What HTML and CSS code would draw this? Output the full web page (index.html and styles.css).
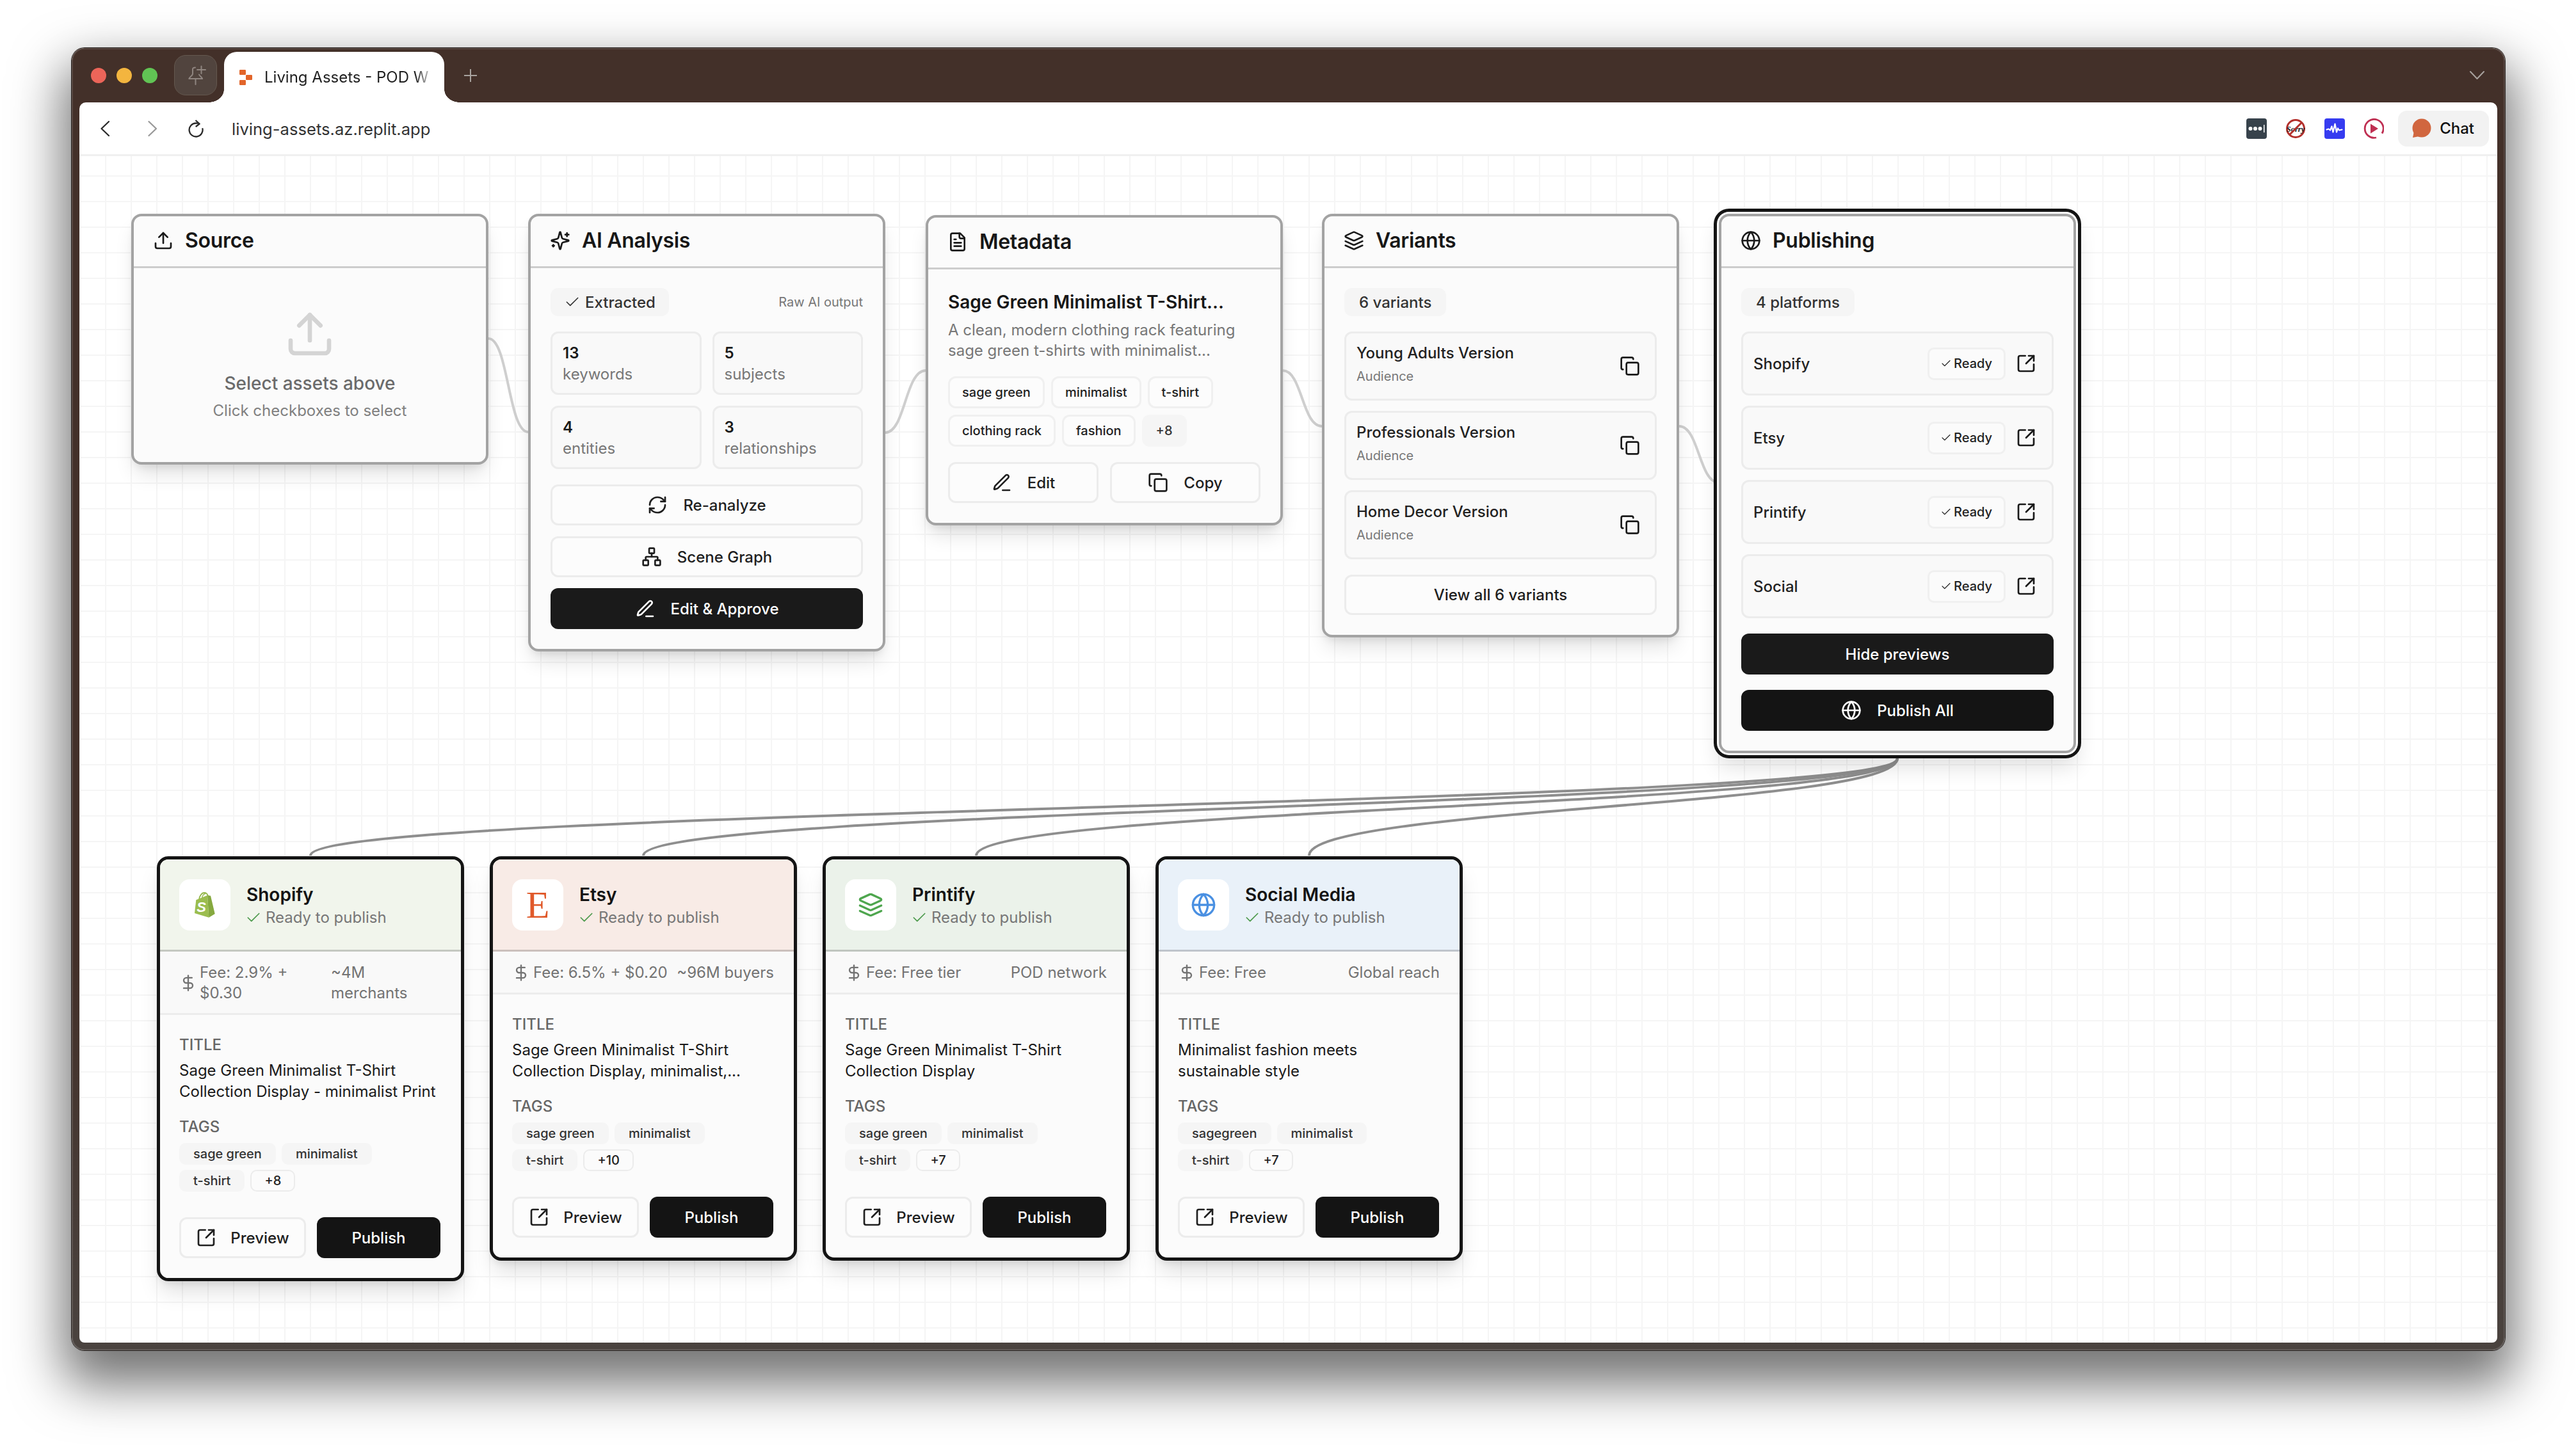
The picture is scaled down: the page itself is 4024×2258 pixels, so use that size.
FILE: index.html
```html
<!DOCTYPE html>
<html lang="en">
<head>
<meta charset="utf-8">
<title>Living Assets - POD Workflow</title>
<link rel="stylesheet" href="styles.css">
</head>
<body>
<svg class="sprite" xmlns="http://www.w3.org/2000/svg">
  <symbol id="i-upload" viewBox="0 0 24 24"><path d="M21 15v4a2 2 0 0 1-2 2H5a2 2 0 0 1-2-2v-4"/><path d="M17 8 12 3 7 8"/><path d="M12 3v12"/></symbol>
  <symbol id="i-spark" viewBox="0 0 24 24"><path d="M9.937 15.5A2 2 0 0 0 8.5 14.063l-6.135-1.582a.5.5 0 0 1 0-.962L8.5 9.936A2 2 0 0 0 9.937 8.5l1.582-6.135a.5.5 0 0 1 .963 0L14.063 8.5A2 2 0 0 0 15.5 9.937l6.135 1.581a.5.5 0 0 1 0 .964L15.5 14.063a2 2 0 0 0-1.437 1.437l-1.582 6.135a.5.5 0 0 1-.963 0z"/><path d="M20 3v4"/><path d="M22 5h-4"/><path d="M4 17v2"/><path d="M5 18H3"/></symbol>
  <symbol id="i-file" viewBox="0 0 24 24"><path d="M15 2H6a2 2 0 0 0-2 2v16a2 2 0 0 0 2 2h12a2 2 0 0 0 2-2V7Z"/><path d="M14 2v4a2 2 0 0 0 2 2h4"/><path d="M10 9H8"/><path d="M16 13H8"/><path d="M16 17H8"/></symbol>
  <symbol id="i-layers" viewBox="0 0 24 24"><path d="m12.83 2.18a2 2 0 0 0-1.66 0L2.6 6.08a1 1 0 0 0 0 1.83l8.58 3.91a2 2 0 0 0 1.66 0l8.58-3.9a1 1 0 0 0 0-1.83Z"/><path d="m22 17.65-9.17 4.16a2 2 0 0 1-1.66 0L2 17.65"/><path d="m22 12.65-9.17 4.16a2 2 0 0 1-1.66 0L2 12.65"/></symbol>
  <symbol id="i-globe" viewBox="0 0 24 24"><circle cx="12" cy="12" r="10"/><path d="M12 2a14.5 14.5 0 0 0 0 20 14.5 14.5 0 0 0 0-20"/><path d="M2 12h20"/></symbol>
  <symbol id="i-check" viewBox="0 0 24 24"><path d="M20 6 9 17l-5-5"/></symbol>
  <symbol id="i-refresh" viewBox="0 0 24 24"><path d="M3 12a9 9 0 0 1 9-9 9.75 9.75 0 0 1 6.74 2.74L21 8"/><path d="M21 3v5h-5"/><path d="M21 12a9 9 0 0 1-9 9 9.75 9.75 0 0 1-6.74-2.74L3 16"/><path d="M8 16H3v5"/></symbol>
  <symbol id="i-network" viewBox="0 0 24 24"><rect x="16" y="16" width="6" height="6" rx="1"/><rect x="2" y="16" width="6" height="6" rx="1"/><rect x="9" y="2" width="6" height="6" rx="1"/><path d="M5 16v-3a1 1 0 0 1 1-1h12a1 1 0 0 1 1 1v3"/><path d="M12 12V8"/></symbol>
  <symbol id="i-pen" viewBox="0 0 24 24"><path d="M13 21h8"/><path d="M16.376 3.622a1 1 0 0 1 3.002 3.002L7.368 18.635a2 2 0 0 1-.855.506l-2.872.838a.5.5 0 0 1-.62-.62l.838-2.872a2 2 0 0 1 .506-.854z"/></symbol>
  <symbol id="i-copy" viewBox="0 0 24 24"><rect x="8" y="8" width="14" height="14" rx="2"/><path d="M4 16c-1.1 0-2-.9-2-2V4c0-1.1.9-2 2-2h10c1.1 0 2 .9 2 2"/></symbol>
  <symbol id="i-ext" viewBox="0 0 24 24"><path d="M21 13v6a2 2 0 0 1-2 2H5a2 2 0 0 1-2-2V5a2 2 0 0 1 2-2h6"/><path d="m21 3-9 9"/><path d="M15 3h6v6"/></symbol>
  <symbol id="i-dollar" viewBox="0 0 24 24"><path d="M12 2v20"/><path d="M17 5H9.5a3.5 3.5 0 0 0 0 7h5a3.5 3.5 0 0 1 0 7H6"/></symbol>
</svg>

<div class="window">
  <div class="tabstrip">
    <div class="lights"><span class="light red"></span><span class="light yellow"></span><span class="light green"></span></div>
    <div class="pin">
      <svg class="i pin-icon" viewBox="0 0 32 34"><path d="M15.500 23v8"/><path d="M5.500 22h20.500"/><path d="M5.500 22C6 19 10.500 18 11 14.500V7C11 5.500 13 4.500 15 4.500"/><path d="M26 22C25.500 19.500 22 18 21 15.500"/><path d="M18 8h13"/><path d="M24.500 2.500V14"/></svg>
    </div>
    <div class="tab">
      <svg class="favicon" viewBox="0 0 20 24"><rect x="0" y="0" width="10" height="8" rx="1.200"/><rect x="10" y="8" width="10" height="8" rx="1.200"/><rect x="0" y="16" width="10" height="8" rx="1.200"/></svg>
      <span class="tab-title">Living Assets - POD W</span>
    </div>
    <svg class="i plus" viewBox="0 0 20 20"><path d="M10 0v20M0 10h20"/></svg>
    <svg class="i collapse" viewBox="0 0 23 13"><path d="M1 1l10.500 11L22 1"/></svg>
  </div>

  <div class="toolbar">
    <svg class="i nav" viewBox="0 0 28 28"><path d="M19 3 7.500 14 19 25"/></svg>
    <svg class="i nav nav-off" viewBox="0 0 28 28"><path d="M8.500 3 20 14 8.500 25"/></svg>
    <svg class="i nav nav-reload" viewBox="0 0 28 28"><path d="M24.200 13.200A10.500 10.500 0 1 1 14 5.500h4"/><path d="M13.500 1 19.700 6.500 13.700 11"/></svg>
    <span class="url">living-assets.az.replit.app</span>
    <div class="toolbar-right">
      <div class="extensions">
        <svg class="ext" viewBox="0 0 32 32"><rect width="32" height="32" rx="4" fill="#37424b"/><circle cx="6.500" cy="16" r="3" fill="#fff"/><circle cx="14" cy="16" r="3" fill="#fff"/><circle cx="21.500" cy="16" r="3" fill="#fff"/><rect x="27" y="10" width="1.500" height="12" fill="#fff"/></svg>
        <svg class="ext" viewBox="0 0 32 32"><circle cx="16" cy="16" r="13.500" fill="#fff" stroke="#b3302c" stroke-width="3"/><text x="16" y="20.500" text-anchor="middle" class="sorry">Sorry</text><path d="M25.500 6.500 6.500 25.500" stroke="#b3302c" stroke-width="3"/></svg>
        <svg class="ext" viewBox="0 0 32 32"><rect width="32" height="32" rx="4" fill="#363cf0"/><path d="M3.500 17.500l3-1 2.500 2 2.500-6 2 9 3-13 2.500 13 2-6 2 3 4.500-1" fill="none" stroke="#fff" stroke-width="2.200" stroke-linejoin="round" stroke-linecap="round"/></svg>
        <svg class="ext" viewBox="0 0 32 32"><path d="M29 23.500A14.500 14.500 0 1 0 20 30" fill="none" stroke="#bf2f52" stroke-width="2.800"/><path d="M11 8.500 23 16 11 23.500z" fill="#bf2f52"/></svg>
      </div>
      <div class="chat">
        <svg class="chat-bubble" viewBox="0 0 32 32"><circle cx="17" cy="15" r="14.500" fill="#d1663f"/><path d="M3 30l2-10 8 8z" fill="#d1663f"/></svg>
        <span>Chat</span>
      </div>
    </div>
  </div>

  <div class="canvas">
    <svg class="edges" viewBox="0 0 3776 1854">
      <g class="edge-soft">
        <path d="M639 285C670 285 670 431 701 431"/>
        <path d="M1259 432C1290 432 1290 335 1322 335"/>
        <path d="M1880 335C1910 335 1910 422 1941 422"/>
        <path d="M2499 422C2530 422 2530 510 2561 510"/>
      </g>
      <g class="edge-strong">
        <path d="M2840 941C2840 1017 361 1017 361 1093"/>
        <path d="M2840 941C2840 1017 881 1017 881 1093"/>
        <path d="M2840 941C2840 1017 1401 1017 1401 1093"/>
        <path d="M2840 941C2840 1017 1921 1017 1921 1093"/>
      </g>
    </svg>

    <section class="node node-source">
      <header class="node-head"><svg class="i i32"><use href="#i-upload"/></svg><h3>Source</h3></header>
      <div class="source-body">
        <svg class="i source-icon"><use href="#i-upload"/></svg>
        <p class="source-title">Select assets above</p>
        <p class="source-sub">Click checkboxes to select</p>
      </div>
    </section>

    <section class="node node-ai">
      <header class="node-head"><svg class="i i32"><use href="#i-spark"/></svg><h3>AI Analysis</h3></header>
      <div class="node-body">
        <div class="between">
          <span class="pill pill-check"><svg class="i i26 thin-icon"><use href="#i-check"/></svg>Extracted</span>
          <span class="meta-note">Raw AI output</span>
        </div>
        <div class="stats">
          <div class="stat"><b>13</b><span>keywords</span></div>
          <div class="stat"><b>5</b><span>subjects</span></div>
          <div class="stat"><b>4</b><span>entities</span></div>
          <div class="stat"><b>3</b><span>relationships</span></div>
        </div>
        <div class="stack">
          <button class="btn btn-line"><svg class="i i32"><use href="#i-refresh"/></svg>Re-analyze</button>
          <button class="btn btn-line"><svg class="i i32"><use href="#i-network"/></svg>Scene Graph</button>
          <button class="btn btn-dark"><svg class="i i32"><use href="#i-pen"/></svg>Edit &amp; Approve</button>
        </div>
      </div>
    </section>

    <section class="node node-meta">
      <header class="node-head"><svg class="i i32"><use href="#i-file"/></svg><h3>Metadata</h3></header>
      <div class="node-body">
        <h4 class="meta-title">Sage Green Minimalist T-Shirt...</h4>
        <p class="meta-desc">A clean, modern clothing rack featuring<br>sage green t-shirts with minimalist...</p>
        <div class="meta-tags">
          <span class="mtag">sage green</span><span class="mtag">minimalist</span><span class="mtag">t-shirt</span><span class="mtag">clothing rack</span><span class="mtag">fashion</span><span class="mtag mtag-more">+8</span>
        </div>
        <div class="split">
          <button class="btn btn-line"><svg class="i i32"><use href="#i-pen"/></svg>Edit</button>
          <button class="btn btn-line"><svg class="i i32"><use href="#i-copy"/></svg>Copy</button>
        </div>
      </div>
    </section>

    <section class="node node-variants">
      <header class="node-head"><svg class="i i32"><use href="#i-layers"/></svg><h3>Variants</h3></header>
      <div class="node-body">
        <div><span class="pill">6 variants</span></div>
        <div class="rows">
          <div class="variant"><div class="variant-text"><p class="variant-name">Young Adults Version</p><p class="variant-sub">Audience</p></div><svg class="i i32"><use href="#i-copy"/></svg></div>
          <div class="variant"><div class="variant-text"><p class="variant-name">Professionals Version</p><p class="variant-sub">Audience</p></div><svg class="i i32"><use href="#i-copy"/></svg></div>
          <div class="variant"><div class="variant-text"><p class="variant-name">Home Decor Version</p><p class="variant-sub">Audience</p></div><svg class="i i32"><use href="#i-copy"/></svg></div>
        </div>
        <button class="btn btn-line btn-short">View all 6 variants</button>
      </div>
    </section>

    <section class="node node-publishing">
      <header class="node-head"><svg class="i i32"><use href="#i-globe"/></svg><h3>Publishing</h3></header>
      <div class="node-body">
        <div><span class="pill">4 platforms</span></div>
        <div class="rows">
          <div class="platform"><span class="platform-name">Shopify</span><span class="ready"><svg class="i i18 thin-icon"><use href="#i-check"/></svg>Ready</span><svg class="i i32"><use href="#i-ext"/></svg></div>
          <div class="platform"><span class="platform-name">Etsy</span><span class="ready"><svg class="i i18 thin-icon"><use href="#i-check"/></svg>Ready</span><svg class="i i32"><use href="#i-ext"/></svg></div>
          <div class="platform"><span class="platform-name">Printify</span><span class="ready"><svg class="i i18 thin-icon"><use href="#i-check"/></svg>Ready</span><svg class="i i32"><use href="#i-ext"/></svg></div>
          <div class="platform"><span class="platform-name">Social</span><span class="ready"><svg class="i i18 thin-icon"><use href="#i-check"/></svg>Ready</span><svg class="i i32"><use href="#i-ext"/></svg></div>
        </div>
        <div class="publish-actions">
          <button class="btn btn-dark">Hide previews</button>
          <button class="btn btn-black"><svg class="i i32"><use href="#i-globe"/></svg>Publish All</button>
        </div>
      </div>
    </section>

    <article class="pcard pcard-1">
      <header class="pcard-head tint-shopify">
        <div class="logo">
          <svg class="shopify-logo" viewBox="0 0 32 40">
            <path fill="none" stroke="#95b84c" stroke-width="1.800" d="M7 11C8 6 11 1 15 1 18 1 20 3 21 6"/>
            <path fill="none" stroke="#95b84c" stroke-width="1.300" d="M11.500 9C12.500 5 14.500 2.500 17 2.500"/>
            <path fill="#9bbd4e" d="M0 33 2.300 12.300 20 5 22.300 39.700Z"/>
            <path fill="#86a93f" d="M20 5 25 5.700 31.700 34 22.300 39.700Z"/>
            <text x="10.500" y="31" text-anchor="middle" class="shopify-s">S</text>
          </svg>
        </div>
        <div><p class="pcard-name">Shopify</p><p class="pcard-status"><svg class="i i26"><use href="#i-check"/></svg>Ready to publish</p></div>
      </header>
      <div class="fee fee-wrap">
        <svg class="i i28"><use href="#i-dollar"/></svg>
        <span class="fee-left">Fee: 2.9% +<br>$0.30</span>
        <span>~4M<br>merchants</span>
      </div>
      <div class="pcard-body">
        <p class="label">TITLE</p>
        <p class="value">Sage Green Minimalist T-Shirt<br>Collection Display - minimalist Print</p>
        <p class="label label-tags">TAGS</p>
        <div class="tags"><span class="tag">sage green</span><span class="tag">minimalist</span><span class="tag">t-shirt</span><span class="tag tag-more">+8</span></div>
        <div class="pcard-actions">
          <button class="btn btn-line btn-preview"><svg class="i i32"><use href="#i-ext"/></svg>Preview</button>
          <button class="btn btn-black btn-publish">Publish</button>
        </div>
      </div>
    </article>

    <article class="pcard pcard-2">
      <header class="pcard-head tint-etsy">
        <div class="logo"><span class="etsy-e">E</span></div>
        <div><p class="pcard-name">Etsy</p><p class="pcard-status"><svg class="i i26"><use href="#i-check"/></svg>Ready to publish</p></div>
      </header>
      <div class="fee">
        <span class="fee-group"><svg class="i i28"><use href="#i-dollar"/></svg>Fee: 6.5% + $0.20</span>
        <span>~96M buyers</span>
      </div>
      <div class="pcard-body">
        <p class="label">TITLE</p>
        <p class="value">Sage Green Minimalist T-Shirt<br>Collection Display, minimalist,...</p>
        <p class="label label-tags">TAGS</p>
        <div class="tags"><span class="tag">sage green</span><span class="tag">minimalist</span><span class="tag">t-shirt</span><span class="tag tag-more">+10</span></div>
        <div class="pcard-actions">
          <button class="btn btn-line btn-preview"><svg class="i i32"><use href="#i-ext"/></svg>Preview</button>
          <button class="btn btn-black btn-publish">Publish</button>
        </div>
      </div>
    </article>

    <article class="pcard pcard-3">
      <header class="pcard-head tint-printify">
        <div class="logo"><svg class="i i44 printify-logo"><use href="#i-layers"/></svg></div>
        <div><p class="pcard-name">Printify</p><p class="pcard-status"><svg class="i i26"><use href="#i-check"/></svg>Ready to publish</p></div>
      </header>
      <div class="fee">
        <span class="fee-group"><svg class="i i28"><use href="#i-dollar"/></svg>Fee: Free tier</span>
        <span>POD network</span>
      </div>
      <div class="pcard-body">
        <p class="label">TITLE</p>
        <p class="value">Sage Green Minimalist T-Shirt<br>Collection Display</p>
        <p class="label label-tags">TAGS</p>
        <div class="tags"><span class="tag">sage green</span><span class="tag">minimalist</span><span class="tag">t-shirt</span><span class="tag tag-more">+7</span></div>
        <div class="pcard-actions">
          <button class="btn btn-line btn-preview"><svg class="i i32"><use href="#i-ext"/></svg>Preview</button>
          <button class="btn btn-black btn-publish">Publish</button>
        </div>
      </div>
    </article>

    <article class="pcard pcard-4">
      <header class="pcard-head tint-social">
        <div class="logo"><svg class="i i44 social-logo"><use href="#i-globe"/></svg></div>
        <div><p class="pcard-name">Social Media</p><p class="pcard-status"><svg class="i i26"><use href="#i-check"/></svg>Ready to publish</p></div>
      </header>
      <div class="fee">
        <span class="fee-group"><svg class="i i28"><use href="#i-dollar"/></svg>Fee: Free</span>
        <span>Global reach</span>
      </div>
      <div class="pcard-body">
        <p class="label">TITLE</p>
        <p class="value">Minimalist fashion meets<br>sustainable style</p>
        <p class="label label-tags">TAGS</p>
        <div class="tags"><span class="tag">sagegreen</span><span class="tag">minimalist</span><span class="tag">t-shirt</span><span class="tag tag-more">+7</span></div>
        <div class="pcard-actions">
          <button class="btn btn-line btn-preview"><svg class="i i32"><use href="#i-ext"/></svg>Preview</button>
          <button class="btn btn-black btn-publish">Publish</button>
        </div>
      </div>
    </article>
  </div>
</div>
</body>
</html>
```
FILE: styles.css
```css
* { box-sizing: border-box; }
html, body { margin: 0; height: 100%; }
body {
  background: #fff;
  font-family: Inter, "Liberation Sans", sans-serif;
  color: #1a1a1a;
  padding: 75px 0 0 112px;
  overflow: hidden;
}
p, h3, h4 { margin: 0; font-weight: inherit; }
button { font: inherit; color: inherit; cursor: pointer; }
.sprite { display: none; }

.i { fill: none; stroke: currentColor; stroke-width: 2; stroke-linecap: round; stroke-linejoin: round; flex: none; }
.thin-icon { stroke-width: 1.5; }
.i18 { width: 18px; height: 18px; }
.i26 { width: 26px; height: 26px; }
.i28 { width: 28px; height: 28px; }
.i32 { width: 32px; height: 32px; }
.i44 { width: 40px; height: 40px; }

/* browser chrome */
.window {
  width: 3801px;
  height: 2035px;
  padding: 0 12px 12px;
  border-radius: 20px;
  background: linear-gradient(#433029 0, #433029 70%, #4a433f 100%);
  box-shadow: inset 0 0 0 2px rgba(255,255,255,.12), 0 0 0 1px #2a2523, 0 40px 80px 14px rgba(0,0,0,.55);
  display: flex;
  flex-direction: column;
}
.tabstrip { height: 85px; flex: none; display: flex; align-items: center; padding-left: 18px; }
.lights { display: flex; gap: 16px; }
.light { width: 24px; height: 24px; border-radius: 50%; }
.red { background: #ec6559; }
.yellow { background: #f3b53f; }
.green { background: #61c454; }
.pin {
  width: 67px; height: 63px; margin-left: 26px;
  border-radius: 18px; background: #51443e; border: 1px solid #64584f;
  display: flex; align-items: center; justify-content: center;
}
.pin-icon { width: 32px; height: 34px; color: #8f8580; }
.tab {
  position: relative;
  width: 344px; height: 79px; margin-left: 11px;
  align-self: flex-end;
  background: #fff;
  border-radius: 20px 20px 0 0;
  display: flex; align-items: center; gap: 19px;
  padding-left: 24px;
}
.tab::before, .tab::after {
  content: ""; position: absolute; bottom: 0; width: 24px; height: 20px;
}
.tab::before { left: -24px; background: radial-gradient(ellipse 24px 20px at 0 0, transparent 98%, #fff 100%); }
.tab::after { right: -24px; background: radial-gradient(ellipse 24px 20px at 100% 0, transparent 98%, #fff 100%); }
.favicon { width: 20px; height: 24px; fill: #e2652a; flex: none; }
.tab-title {
  font-size: 24px; white-space: nowrap; width: 262px; color: #1f1f1f;
  -webkit-mask-image: linear-gradient(90deg, #000 90%, rgba(0,0,0,.1));
  mask-image: linear-gradient(90deg, #000 90%, rgba(0,0,0,.1));
}
.plus { width: 20px; height: 20px; margin-left: 31px; color: #a8a29e; }
.collapse { width: 23px; height: 13px; margin-left: auto; margin-right: 20px; color: #a8a29e; }

.toolbar {
  height: 84px; flex: none;
  background: #fff;
  border-bottom: 3px solid #f0f0f0;
  border-radius: 10px 10px 0 0;
  display: flex; align-items: center;
  padding-left: 27px; padding-right: 13px;
  gap: 45px;
}
.nav { width: 28px; height: 28px; color: #2b2b2b; stroke-width: 2.300; }
.nav-off { color: #999; }
.nav-reload { margin-left: -5px; stroke-linecap: butt; }
.url { font-size: 25.600px; color: #333; margin-left: -3px; position: relative; top: 1px; }
.toolbar-right { margin-left: auto; display: flex; align-items: center; gap: 22px; }
.extensions { display: flex; align-items: center; gap: 29px; }
.ext { width: 32px; height: 32px; display: block; }
.sorry { font: italic 700 12.500px "Liberation Serif", serif; fill: #1a1a1a; }
.chat {
  height: 56px; padding: 0 23px 0 20px;
  background: #f2f2f2; border-radius: 14px;
  display: flex; align-items: center; gap: 13px;
  font-size: 24px; font-weight: 500; color: #111;
}
.chat-bubble { width: 32px; height: 32px; }

/* canvas */
.canvas {
  position: relative;
  flex: 1;
  background-color: #fff;
  background-image:
    linear-gradient(#f5f5f5 2px, transparent 2px),
    linear-gradient(90deg, #f5f5f5 2px, transparent 2px);
  background-size: 40px 40px;
  background-position: 0 -10px;
  border-radius: 0 0 8px 8px;
  overflow: hidden;
}
.edges { position: absolute; inset: 0; width: 3776px; height: 1854px; fill: none; }
.edge-soft { stroke: #cfcfcf; stroke-width: 4; }
.edge-strong { stroke: #8e8e8e; stroke-width: 4; }

/* flow nodes */
.node {
  position: absolute;
  width: 558px;
  background: #fbfbfb;
  border: 4px solid #a3a3a3;
  border-radius: 16px;
  box-shadow: 0 20px 32px -6px rgba(0,0,0,.12), 0 8px 14px -6px rgba(0,0,0,.1);
}
.node-source { left: 81px; top: 90px; height: 392px; }
.node-ai { left: 701px; top: 90px; }
.node-meta { left: 1322px; top: 92px; }
.node-variants { left: 1941px; top: 90px; }
.node-publishing {
  left: 2561px; top: 90px;
  box-shadow: 0 0 0 3px #fff, 0 0 0 8px #141414, 0 20px 32px 2px rgba(0,0,0,.12);
}
.node-head {
  height: 81px;
  border-bottom: 3px solid #cdcdcd;
  display: flex; align-items: center; gap: 18px;
  padding: 0 30px 3px;
  color: #1a1a1a;
}
.node-head h3 { font-size: 32px; font-weight: 600; letter-spacing: -.3px; color: #171717; }
.node-body { padding: 31px; display: flex; flex-direction: column; }

.source-body { padding-top: 63px; display: flex; flex-direction: column; align-items: center; text-align: center; }
.source-icon { width: 80px; height: 80px; color: #d4d4d4; }
.source-title { margin-top: 17px; font-size: 28px; line-height: 40px; font-weight: 500; color: #6b6b6b; }
.source-sub { margin-top: 7px; font-size: 24px; line-height: 32px; color: #808080; }

.between { display: flex; align-items: center; justify-content: space-between; }
.pill {
  display: inline-flex; align-items: center; gap: 7px;
  height: 44px; padding: 0 23px;
  background: #f5f5f5; border-radius: 12px;
  font-size: 24px; font-weight: 500; color: #333;
}
.pill-check { padding: 0 21px; }
.meta-note { font-size: 20px; color: #777; }

.stats { margin-top: 24px; display: grid; grid-template-columns: 1fr 1fr; gap: 17px; }
.stat {
  height: 99px; padding: 0 16px;
  background: #f9f9f9; border: 3px solid #ececec; border-radius: 12px;
  display: flex; flex-direction: column; justify-content: center;
}
.stat b { font-size: 24px; font-weight: 600; line-height: 33px; }
.stat span { font-size: 24px; line-height: 33px; color: #777; }

.stack { margin-top: 24px; display: flex; flex-direction: column; gap: 17px; }
.btn {
  height: 64px; width: 100%;
  border-radius: 12px;
  display: flex; align-items: center; justify-content: center; gap: 24px;
  font-size: 24px; font-weight: 500;
  padding: 0;
}
.btn-line { background: #fcfcfc; border: 3px solid #ececec; color: #1f1f1f; }
.btn-dark { background: #1a1a1a; border: 0; color: #fff; }
.btn-black { background: #141414; border: 0; color: #fff; }
.btn-short { height: 63px; margin-top: 24px; }

.meta-title { font-size: 28px; line-height: 40px; font-weight: 600; color: #171717; }
.meta-desc { margin-top: 8px; font-size: 24px; line-height: 32px; color: #777; }
.meta-tags { margin-top: 24px; display: flex; flex-wrap: wrap; gap: 10px; }
.mtag {
  height: 50px; padding: 0 19px;
  border: 3px solid #f0f0f0; border-radius: 12px; background: #fcfcfc;
  display: flex; align-items: center;
  font-size: 20px; font-weight: 500; color: #222;
}
.mtag-more { background: #f5f5f5; border-color: #f5f5f5; color: #333; }
.split { margin-top: 24px; display: grid; grid-template-columns: 1fr 1fr; gap: 18px; }

.rows { margin-top: 24px; display: flex; flex-direction: column; gap: 16px; }
.variant {
  height: 108px; padding: 0 23px 0 16px;
  background: #f9f9f9; border: 3px solid #ececec; border-radius: 12px;
  display: flex; align-items: center; justify-content: space-between;
}
.variant-text { padding-bottom: 4px; }
.variant-name { font-size: 24px; line-height: 36px; font-weight: 500; color: #222; }
.variant-sub { font-size: 20px; line-height: 36px; color: #777; }

.platform {
  height: 100px; padding: 0 24px 0 16px;
  background: #f9f9f9; border: 3px solid #ececec; border-radius: 12px;
  display: flex; align-items: center; gap: 16px;
}
.platform-name { font-size: 24px; font-weight: 500; color: #222; margin-right: auto; }
.ready {
  height: 51px; padding: 0 18px 0 17px;
  background: #fbfbfb; border: 3px solid #f0f0f0; border-radius: 10px;
  display: flex; align-items: center; gap: 3px;
  font-size: 20px; font-weight: 500; color: #222;
}
.publish-actions { margin-top: 24px; display: flex; flex-direction: column; gap: 24px; }

/* publish preview cards */
.pcard {
  position: absolute; top: 1094px;
  width: 480px;
  background: #fbfbfb;
  border: 5px solid #141414;
  border-radius: 18px;
  box-shadow: 0 22px 34px -6px rgba(0,0,0,.13), 0 8px 14px -6px rgba(0,0,0,.1);
  overflow: hidden;
}
.pcard-1 { left: 121px; }
.pcard-2 { left: 641px; }
.pcard-3 { left: 1161px; }
.pcard-4 { left: 1681px; }
.pcard-head {
  height: 144px;
  border-bottom: 3px solid rgba(0,0,0,.18);
  display: flex; align-items: center; gap: 25px;
  padding: 0 30px;
}
.tint-shopify { background: #f1f5ec; }
.tint-etsy { background: #f8ebe6; }
.tint-printify { background: #ebf2ea; }
.tint-social { background: #e9f1f9; }
.logo {
  width: 80px; height: 80px; flex: none;
  background: #fff; border-radius: 16px;
  display: flex; align-items: center; justify-content: center;
}
.shopify-logo { width: 32px; height: 40px; }
.shopify-s { font: italic 700 22px "Liberation Sans", sans-serif; fill: #fff; }
.etsy-e { font: 400 60px/1 "Liberation Serif", serif; color: #e0592a; }
.printify-logo { color: #4ea64e; }
.social-logo { color: #4a90e2; }
.pcard-name { font-size: 28px; line-height: 40px; font-weight: 600; color: #141414; }
.pcard-status { display: flex; align-items: center; gap: 6px; font-size: 24px; line-height: 32px; color: #777; margin-left: -2px; }
.pcard-status svg { color: #4c9a4c; stroke-width: 1.6; }

.fee {
  padding: 17px 31px 15px 30px;
  background: #f9f9f9;
  border-bottom: 3px solid #ececec;
  display: flex; align-items: center; justify-content: space-between;
  font-size: 24px; line-height: 32px; color: #737373;
}
.fee-group { display: flex; align-items: center; gap: 5px; }
.fee-wrap { justify-content: flex-start; gap: 4px; }
.fee-left { width: 201px; flex: none; }
.pcard-body { padding: 31px 30px; }
.label { font-size: 24px; line-height: 32px; font-weight: 500; color: #666; }
.label-tags { margin-top: 23px; }
.value { margin-top: 8px; font-size: 24px; line-height: 32.500px; color: #1a1a1a; }
.tags { margin-top: 9px; display: flex; flex-wrap: wrap; gap: 8px 9px; width: 400px; }
.tag {
  height: 34px; padding: 0 22px;
  background: #f5f5f5; border-radius: 10px;
  display: flex; align-items: center;
  font-size: 20px; font-weight: 500; color: #333;
}
.tag-more { background: transparent; border: 2px solid #ececec; padding: 0 20px; color: #222; }
.pcard-actions { margin-top: 40px; display: grid; grid-template-columns: 198px 193px; gap: 17px; }
.btn-preview { gap: 22px; }
```
